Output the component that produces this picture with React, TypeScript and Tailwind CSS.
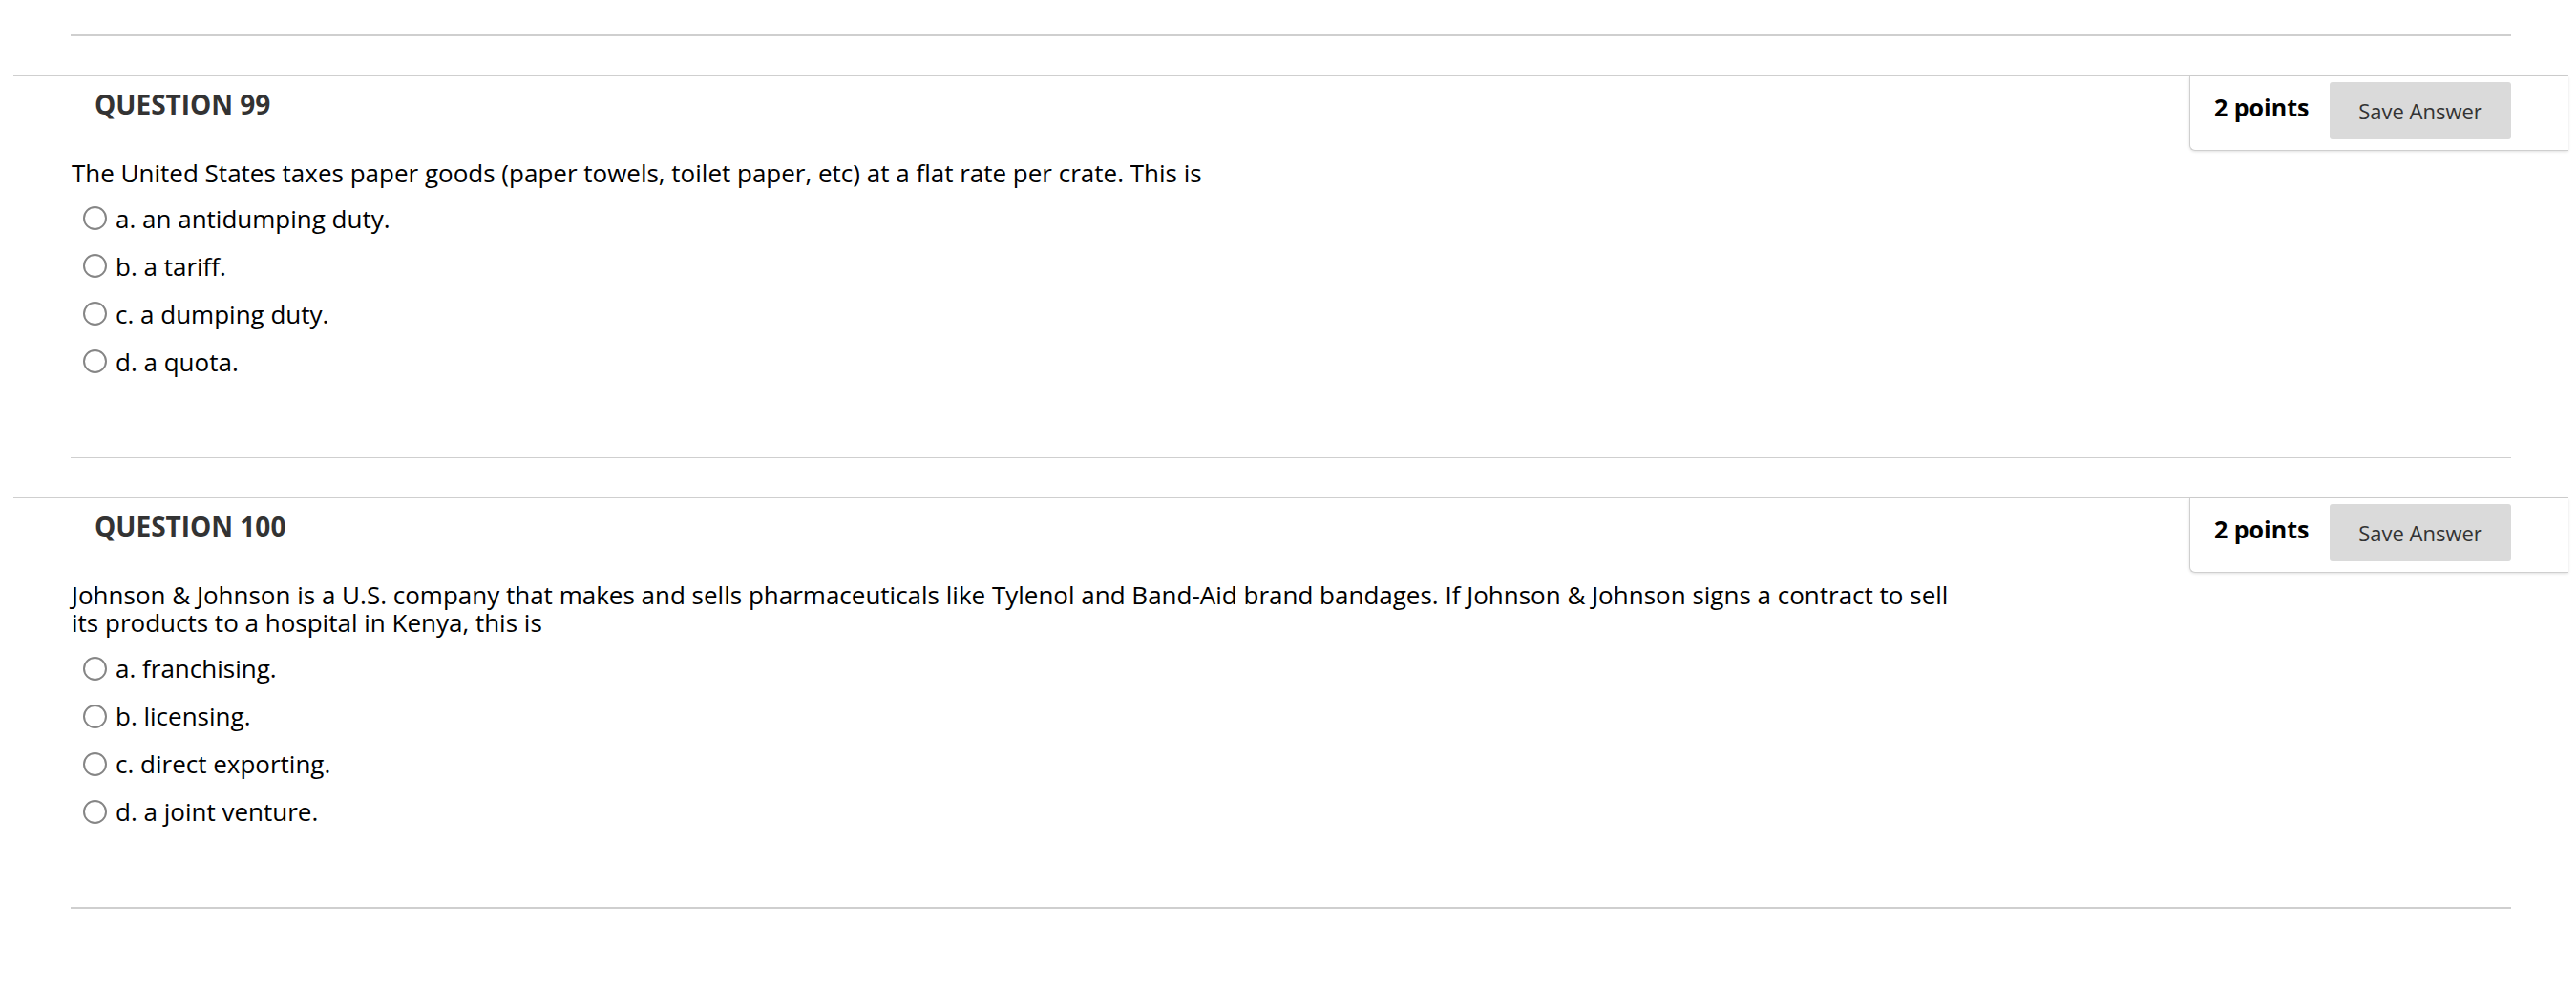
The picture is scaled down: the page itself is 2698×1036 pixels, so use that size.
import React from "react";

type Q = {
  num: number;
  text: React.ReactNode;
  options: string[];
};

const questions: Q[] = [
  {
    num: 99,
    text: "The United States taxes paper goods (paper towels, toilet paper, etc) at a flat rate per crate. This is",
    options: ["a. an antidumping duty.", "b. a tariff.", "c. a dumping duty.", "d. a quota."],
  },
  {
    num: 100,
    text: "Johnson & Johnson is a U.S. company that makes and sells pharmaceuticals like Tylenol and Band-Aid brand bandages. If Johnson & Johnson signs a contract to sell its products to a hospital in Kenya, this is",
    options: ["a. franchising.", "b. licensing.", "c. direct exporting.", "d. a joint venture."],
  },
];

function Radio() {
  return <span className="block w-[25px] h-[25px] rounded-full border-2 border-[#858585] bg-white shrink-0" />;
}

function Question({ q }: { q: Q }) {
  return (
    <div className="mt-[41px] ml-[14px] w-[2676px] border-t-[1.5px] border-[#cfcfcf]">
      <div className="flex justify-between items-start">
        <h2 className="pl-[85px] pt-[10px] text-[28px] leading-[38px] font-bold text-[#333333]">
          QUESTION {q.num}
        </h2>
        <div className="w-[397px] h-[78px] flex items-start border-l-[1.5px] border-b-[1.5px] border-[#cfcfcf] rounded-bl-[6px] bg-white shadow-[0_1px_3px_rgba(0,0,0,0.12)]">
          <span className="ml-[25px] mt-[17px] text-[25px] font-bold text-black leading-[30px]">2 points</span>
          <button className="ml-auto mr-[60px] mt-[6px] w-[190px] h-[60px] rounded-[3px] bg-[#dadada] text-[22px] text-[#333333] leading-[30px]">
            Save Answer
          </button>
        </div>
      </div>
      <p className="mt-[9px] ml-[61px] max-w-[1985px] text-[26px] leading-[29px] text-black">{q.text}</p>
      <div className="mt-[8px] ml-[73px]">
        {q.options.map((o) => (
          <div key={o} className="h-[50px] flex items-center gap-[9px]">
            <Radio />
            <span className="text-[26px] leading-[30px] text-black">{o}</span>
          </div>
        ))}
      </div>
      <div className="mt-[75px] -ml-[14px] pl-[74px] pr-[60px]">
        <div className="h-[1.5px] bg-[#cfcfcf]" />
      </div>
    </div>
  );
}

export default function App() {
  return (
    <div className="w-[2698px] h-[1036px] bg-white overflow-hidden font-['Open_Sans',sans-serif]">
      <div className="pt-[36px] pl-[74px] pr-[68px]">
        <div className="h-[1.5px] bg-[#cfcfcf]" />
      </div>
      {questions.map((q) => (
        <Question key={q.num} q={q} />
      ))}
    </div>
  );
}
